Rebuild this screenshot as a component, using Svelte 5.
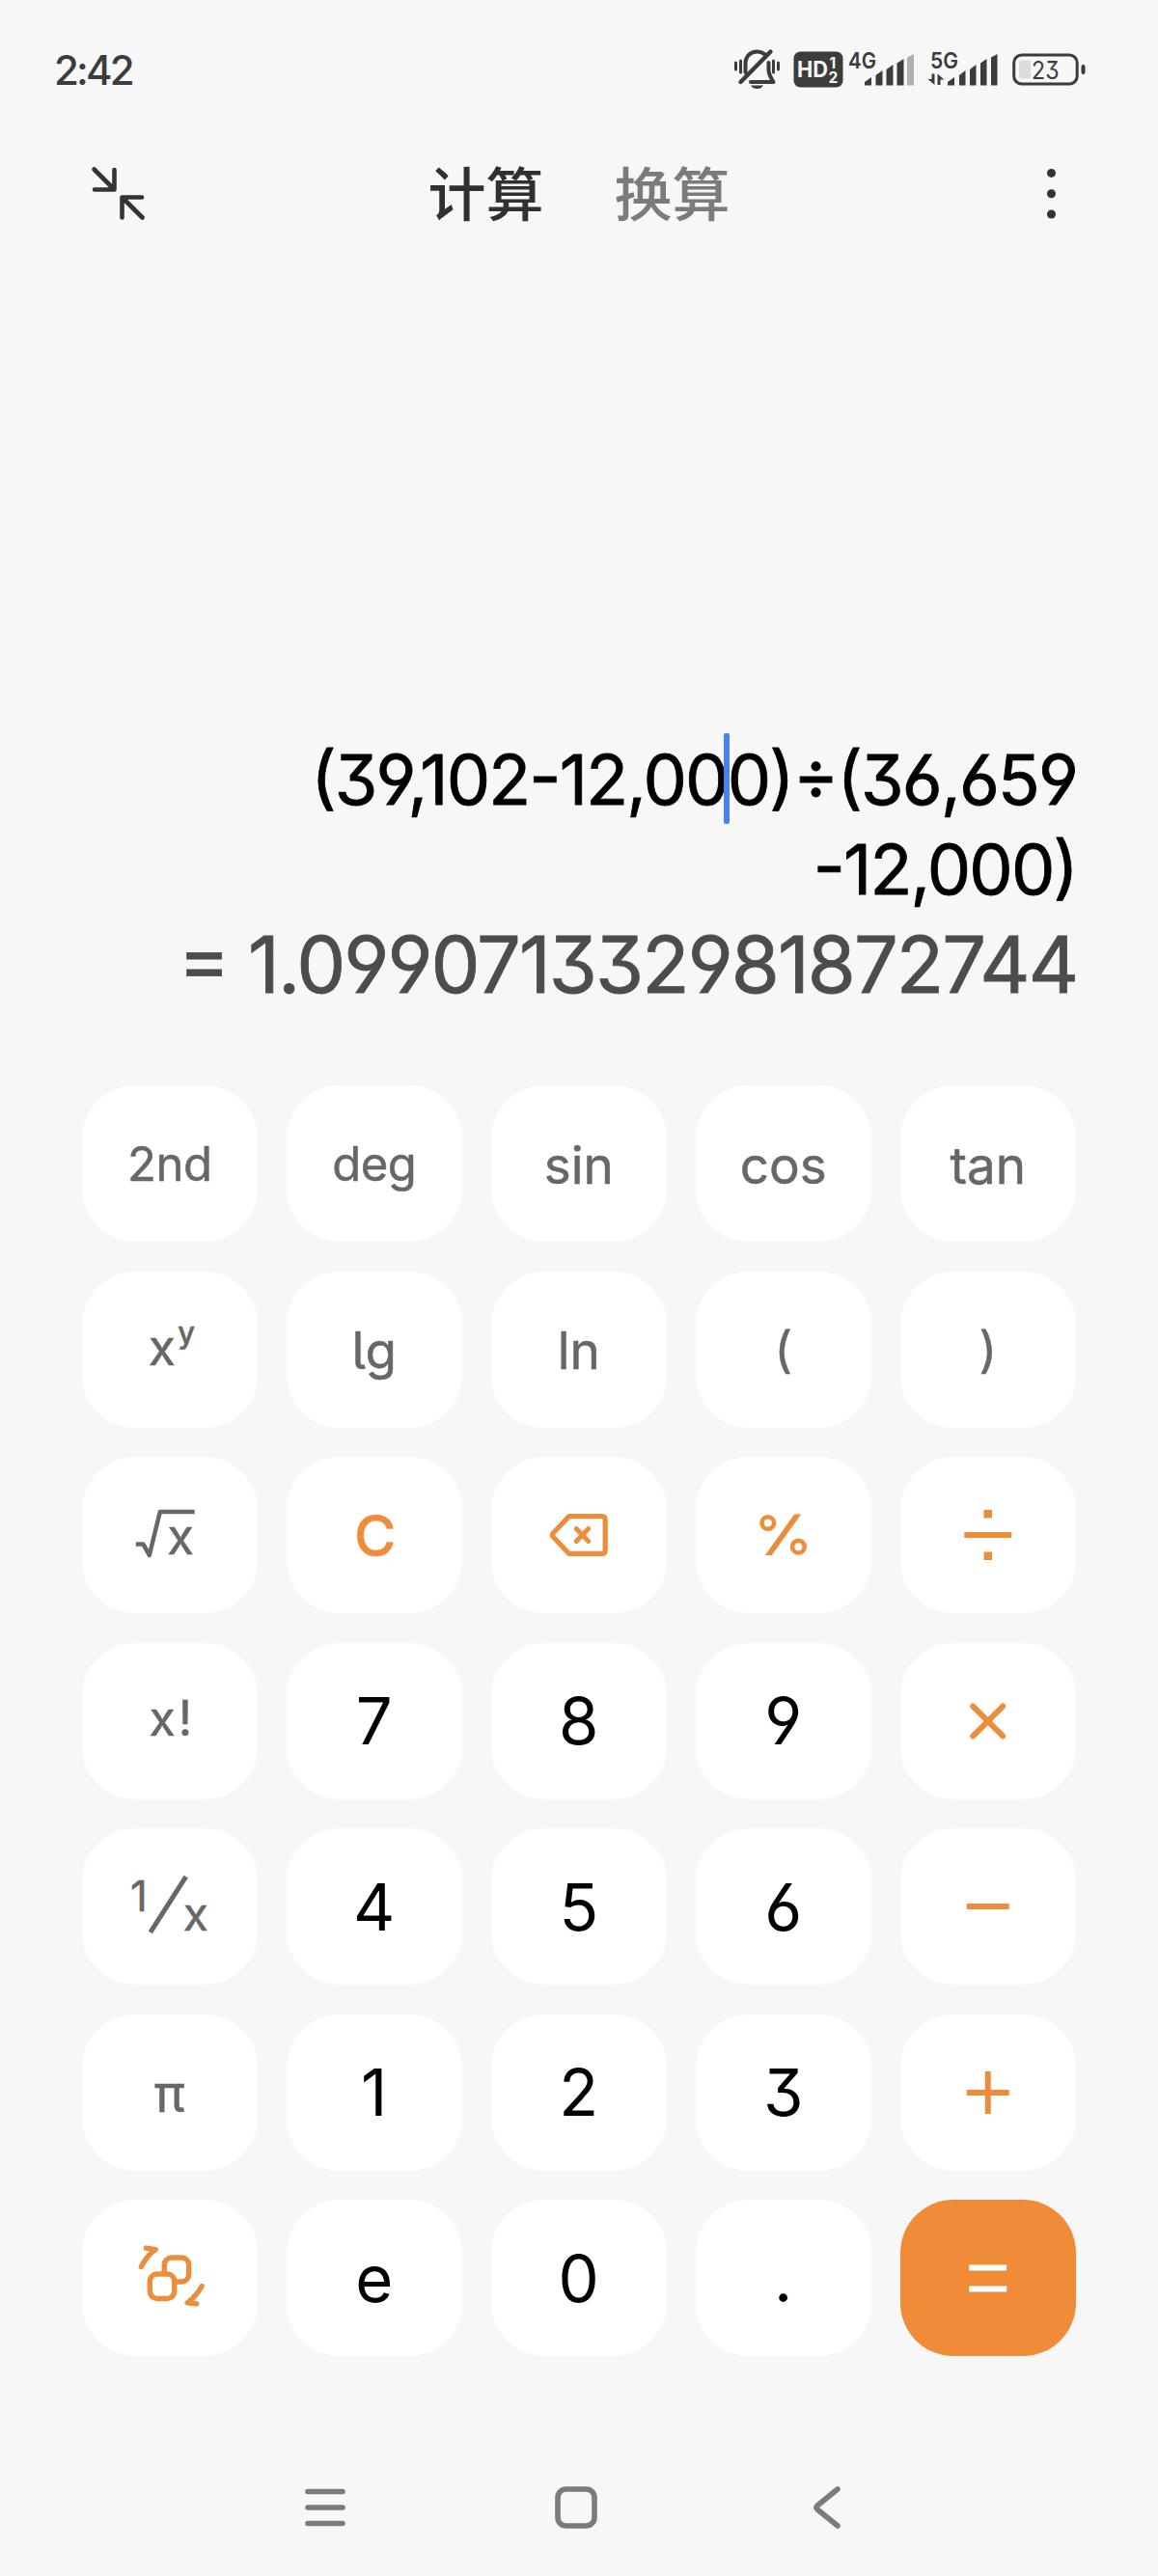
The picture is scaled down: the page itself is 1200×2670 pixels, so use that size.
<script lang="ts">
  let tab = 0;
  const tabs = ["计算", "换算"];

  const rows = [
    ["2nd", "deg", "sin", "cos", "tan"],
    ["pow", "lg", "ln", "(", ")"],
    ["root", "C", "back", "percent", "divide"],
    ["x!", "7", "8", "9", "times"],
    ["inverse", "4", "5", "6", "minus"],
    ["π", "1", "2", "3", "plus"],
    ["convert", "e", "0", ".", "equals"],
  ];
  const icons = [
    "pow", "root", "inverse", "back", "percent", "divide",
    "times", "minus", "plus", "convert", "equals",
  ];

  const kind = (key: string) => {
    if (/^[0-9e.]$/.test(key)) return "digit";
    if (key == "C") return "clear";
    if (key == "2nd" || key == "deg") return "fn small";
    if (key == "ln") return "fn straight";
    if (key == "(" || key == ")") return "fn paren";
    if (key == "x!") return "fn fact";
    if (key == "π") return "fn pi";
    return "fn";
  };
</script>

<div class="phone">
  <div class="status">
    <span class="clock">2:42</span>
    <div class="indicators">
      <svg class="bell" width="50" height="44" viewBox="0 0 50 44">
        <g fill="none" stroke="#3c3c3c" stroke-linecap="round" stroke-linejoin="round">
          <path d="M12.500 25V16C12.500 8 18 3.500 24.500 3.500C27.500 3.500 30 4.300 32 5.800" stroke-width="4" />
          <path d="M36.500 15V23C37 28 39 31 41.500 35H18" stroke-width="4" />
          <path d="M7.500 35L38.500 3.500" stroke-width="4.400" />
          <path d="M2.500 15V22M7.500 13V25M41.500 13V25M46.500 15V22" stroke-width="3" />
        </g>
        <path d="M18 38.500H31Q29 42 24.500 42T18 38.500Z" fill="#3c3c3c" />
      </svg>
      <svg class="hd" width="52" height="54" viewBox="0 -8 52 54">
        <rect x="0.500" y="0.500" width="51" height="37" rx="7" fill="#3c3c3c" />
        <text class="big" x="4" y="27" textLength="32" lengthAdjust="spacingAndGlyphs">HD</text>
        <text x="37.500" y="17.500">1</text>
        <text x="36.500" y="33">2</text>
      </svg>
      <svg class="sim1" width="70" height="54" viewBox="0 -8 70 54">
        <text x="0" y="18" textLength="29" lengthAdjust="spacingAndGlyphs">4G</text>
        <path d="M17 35.500V32L24 27V35.500ZM28.500 35.500V25L35.500 20V35.500ZM39.500 35.500V19L46.500 14V35.500ZM50.500 35.500V12.500L57.500 8V35.500Z" />
        <path class="weak" d="M61 35.500V6.500L68 3V35.500Z" />
      </svg>
      <svg class="sim2" width="74" height="54" viewBox="0 -8 74 54">
        <text x="3" y="18" textLength="29" lengthAdjust="spacingAndGlyphs">5G</text>
        <path d="M4.500 23.500H7.500V35L0.500 29H4.500ZM10.500 35V23.500L17.500 29.500H13.500V35Z" />
        <path d="M21 35.500V32L28 27V35.500ZM33 35.500V25L39.500 20V35.500ZM44 35.500V19L50.500 14V35.500ZM55 35.500V12.500L61.500 8V35.500ZM66 35.500V6.500L72.500 3V35.500Z" />
      </svg>
      <svg class="battery" width="76" height="34" viewBox="0 0 76 34">
        <rect x="1.700" y="2" width="65.500" height="30" rx="8" fill="none" stroke="#3c3c3c" stroke-width="3" />
        <rect x="7" y="7.500" width="12" height="19" rx="3" fill="#dcdcdc" />
        <rect x="71.500" y="12" width="4" height="10" rx="2" fill="#3c3c3c" />
        <text x="20" y="26.500" textLength="28.500" lengthAdjust="spacingAndGlyphs">23</text>
      </svg>
    </div>
  </div>

  <div class="header">
    <svg width="56" height="56" viewBox="0 0 56 56" fill="none" stroke="#333" stroke-width="4.600" stroke-linecap="round" stroke-linejoin="round">
      <path d="M3.500 3.500L24 24M24.500 4V24.500H4" />
      <path d="M53.500 53.500L33 33M53 32.500H32.500V53.500" />
    </svg>
    <div class="tabs">
      {#each tabs as name, i}
        <span class:active={tab == i} on:click={() => (tab = i)}>{name}</span>
      {/each}
    </div>
    <svg width="10" height="56" viewBox="0 0 10 56" fill="#333">
      <circle cx="4.500" cy="7.400" r="4.500" />
      <circle cx="4.500" cy="28.700" r="4.500" />
      <circle cx="4.500" cy="50" r="4.500" />
    </svg>
  </div>

  <div class="display">
    <p class="expr">(39,102-12,00<i class="caret"></i>0)÷(36,659</p>
    <p class="expr">-12,000)</p>
    <p class="result">= 1.099071332981872744</p>
  </div>

  <div class="keypad">
    {#each rows as row}
      {#each row as key}
        <div class="key" class:accent={key == "equals"}>
          {#if icons.includes(key)}
            <svg viewBox="-91 -81 182 162" fill="none" stroke="#ec8d3b" stroke-width="6" aria-label={key}>
              {#if key == "pow"}
                <text x="-22" y="16" font-size="52">x</text>
                <text x="8.500" y="-7" font-size="31" font-weight="500">y</text>
              {:else if key == "root"}
                <path d="M-35 9.500H-27.500L-21 21L-10 -24H26" stroke="#676767" stroke-width="4.500" stroke-linejoin="round" />
                <text x="-2.500" y="20" font-size="51">x</text>
              {:else if key == "inverse"}
                <text x="-41" y="5" font-size="44">1</text>
                <path d="M-20 27L17 -31" stroke="#676767" stroke-width="5" />
                <text x="14" y="25" font-size="48">x</text>
              {:else if key == "back"}
                <path d="M-10 -19.500H24Q27.500 -19.500 27.500 -16V16Q27.500 19.500 24 19.500H-10L-27 1.500Q-28 0 -27 -1.500Z" stroke-width="5.200" stroke-linejoin="round" />
                <path d="M-2.500 -6.500L10 6.500M10 -6.500L-2.500 6.500" stroke-width="5" stroke-linecap="round" />
              {:else if key == "percent"}
                <circle cx="-16" cy="-12.500" r="6.300" stroke-width="4.600" />
                <circle cx="15.700" cy="12.200" r="6.300" stroke-width="4.600" />
                <path d="M-19 21L11.500 -21.500H18.500L-12 21Z" fill="#ec8d3b" stroke="none" />
              {:else if key == "divide"}
                <path d="M-24.500 0H24.500" />
                <path d="M0 -26V-17.500M0 17.500V26" stroke-width="8.500" />
              {:else if key == "times"}
                <path d="M-15.500 -15.500L15.500 15.500M15.500 -15.500L-15.500 15.500" stroke-linecap="round" />
              {:else if key == "minus"}
                <path d="M-22 0H22" />
              {:else if key == "plus"}
                <path d="M-22 0H22M0 -22V22" />
              {:else if key == "convert"}
                <g stroke-width="5.400" stroke-linecap="round" stroke-linejoin="round">
                  <rect x="-5.500" y="-21" width="25.500" height="25" rx="7.500" />
                  <rect x="-20.500" y="-4" width="25.500" height="25.500" rx="7.500" fill="#fff" />
                  <path d="M-29.500 -11.500Q-23 -24 -14.500 -29.500L-24.500 -31M33.500 8.500Q28 18.500 18.500 26L28 27" />
                </g>
              {:else}
                <path d="M-19.500 -10.500H19.500M-19.500 11.500H19.500" stroke="#fff" />
              {/if}
            </svg>
          {:else}
            <span class={kind(key)}>{key}</span>
          {/if}
        </div>
      {/each}
    {/each}
  </div>

  <div class="nav">
    <svg width="44" height="44" viewBox="0 0 44 44">
      <path d="M4 5.500H40M4 22H40M4 38.500H40" />
    </svg>
    <svg width="44" height="44" viewBox="0 0 44 44">
      <rect x="3" y="3" width="38" height="38" rx="8.500" />
    </svg>
    <svg width="44" height="44" viewBox="0 0 44 44">
      <path d="M33 3L12 20Q10 22 12 24L33 41" />
    </svg>
  </div>
</div>

<style>
  :global(body) {
    background: #f7f7f7;
  }
  .phone {
    display: flex;
    flex-direction: column;
    box-sizing: border-box;
    width: 1200px;
    height: 2670px;
    background: #f7f7f7;
    font-family: Inter, "Noto Sans CJK SC", sans-serif;
    font-feature-settings: "cv03", "cv04", "cv09", "calt" 0;
    color: #000;
  }
  .status {
    display: flex;
    align-items: center;
    justify-content: space-between;
    height: 144px;
    padding: 0 75px 0 56px;
  }
  .clock {
    font-size: 42px;
    font-weight: 500;
    letter-spacing: -2.8px;
    color: #3c3c3c;
  }
  .indicators {
    display: flex;
    align-items: center;
    fill: #3c3c3c;
  }
  .indicators text {
    font-size: 23px;
    font-weight: 600;
  }
  .hd {
    margin-left: 12px;
  }
  .indicators .hd text {
    fill: #f7f7f7;
    font-size: 15.5px;
    font-weight: 700;
  }
  .indicators .hd .big {
    font-size: 23px;
  }
  .sim1 {
    margin-left: 5px;
  }
  .weak {
    fill: #b0b0b0;
  }
  .sim2 {
    margin-left: 12px;
  }
  .battery {
    margin-left: 14px;
  }
  .indicators .battery text {
    font-size: 26px;
    font-weight: 400;
  }
  .header {
    display: flex;
    align-items: center;
    justify-content: space-between;
    height: 112px;
    padding: 0 105px 0 94px;
  }
  .tabs {
    display: flex;
    gap: 73px;
    margin: -5px 0 0 -35px;
    font-family: "Noto Sans CJK SC", sans-serif;
    font-size: 60px;
    font-weight: 500;
    line-height: 80px;
    color: #7b7b7b;
  }
  .tabs span {
    cursor: pointer;
  }
  .tabs .active {
    color: #303030;
  }
  .display {
    display: flex;
    flex-direction: column;
    align-items: flex-end;
    justify-content: flex-end;
    height: 797px;
    padding-right: 84px;
  }
  p {
    margin: 0;
    white-space: pre;
    font-feature-settings: "cv03", "cv04", "cv09", "case", "calt" 0;
    -webkit-text-stroke: 0.8px currentColor;
  }
  .expr {
    font-size: 72px;
    line-height: 93px;
    letter-spacing: -1.8px;
  }
  .caret {
    display: inline-block;
    position: relative;
  }
  .caret::after {
    content: "";
    position: absolute;
    left: -4px;
    bottom: -20px;
    width: 6px;
    height: 94px;
    border-radius: 2px;
    background: #4a80f0;
  }
  .result {
    font-size: 81px;
    line-height: 106px;
    letter-spacing: -2px;
    color: #4c4c4c;
  }
  .keypad {
    display: grid;
    grid-template-columns: repeat(5, 181.5px);
    grid-auto-rows: 162px;
    gap: 30.5px;
    margin: 72px 0 0 85px;
  }
  .key {
    display: flex;
    align-items: center;
    justify-content: center;
    border-radius: 55px;
    background: #fff;
    cursor: pointer;
  }
  .key svg {
    width: 182px;
    height: 162px;
  }
  .key text {
    fill: #676767;
    stroke: #676767;
    stroke-width: 0.5;
  }
  .accent {
    background: #f08b38;
  }
  .digit {
    font-size: 67px;
    line-height: 1;
  }
  .clear {
    padding-left: 2px;
    font-size: 59px;
    font-weight: 500;
    color: #ec8d3b;
    -webkit-text-stroke: 0.5px currentColor;
  }
  .fn {
    padding-top: 3px;
    font-size: 53px;
    color: #676767;
    font-feature-settings: "cv05", "calt" 0;
    -webkit-text-stroke: 0.5px currentColor;
  }
  .straight {
    font-feature-settings: "calt" 0;
  }
  .small {
    padding-top: 0;
    font-size: 49px;
    letter-spacing: -0.5px;
  }
  .paren {
    padding-top: 0;
    font-size: 51px;
  }
  .fact {
    padding: 0 0 6px 5px;
    font-size: 50px;
    letter-spacing: 3px;
  }
  .pi {
    font-size: 53px;
  }
  .nav {
    display: flex;
    align-items: center;
    justify-content: space-between;
    height: 44px;
    margin: 135px 321px 0 315px;
  }
  .nav svg {
    fill: none;
    stroke: #7b7b7b;
    stroke-width: 5.6;
    stroke-linecap: round;
    stroke-linejoin: round;
  }
</style>
